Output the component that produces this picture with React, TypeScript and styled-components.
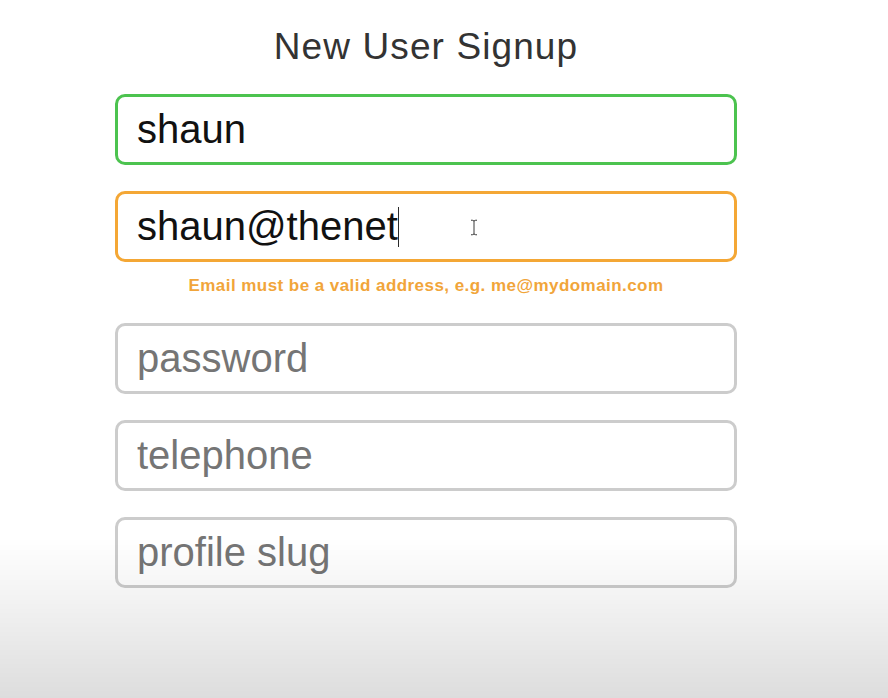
import React from "react";
import styled, { createGlobalStyle } from "styled-components";

const GlobalStyle = createGlobalStyle`
  html, body {
    margin: 0;
    padding: 0;
    background: #ffffff;
  }
  body {
    font-family: "Liberation Sans", Arial, Helvetica, sans-serif;
  }
  #root {
    min-height: 698px;
  }
`;

const Page = styled.main`
  display: flex;
  flex-direction: column;
  width: 622px;
  padding: 27px 0 0 115px;
`;

const Title = styled.h1`
  margin: 0 0 27px;
  font-size: 37px;
  line-height: 40px;
  font-weight: 400;
  letter-spacing: 1.1px;
  color: #333333;
  text-align: center;
`;

const Form = styled.form`
  display: flex;
  flex-direction: column;
  gap: 26px;
`;

const FieldGroup = styled.div`
  display: flex;
  flex-direction: column;
`;

type Status = "valid" | "invalid" | "idle";

const borderColors: Record<Status, string> = {
  valid: "#4cc34f",
  invalid: "#f4a735",
  idle: "#cccccc",
};

const InputWrap = styled.div`
  position: relative;
`;

const TextInput = styled.input<{ $status: Status }>`
  box-sizing: border-box;
  width: 100%;
  height: 71px;
  padding: 0 19px;
  border: 3px solid ${(p) => borderColors[p.$status]};
  border-radius: 10px;
  background: #ffffff;
  font-family: "Liberation Sans", Arial, Helvetica, sans-serif;
  font-size: 40px;
  color: #111111;
  outline: none;

  &::placeholder {
    color: #757575;
    opacity: 1;
  }
`;

const CaretLayer = styled.div`
  position: absolute;
  inset: 0;
  display: flex;
  align-items: center;
  padding-left: 22px;
  pointer-events: none;
  font-family: "Liberation Sans", Arial, Helvetica, sans-serif;
  font-size: 40px;
`;

const Ghost = styled.span`
  color: transparent;
  white-space: pre;
`;

const Caret = styled.span`
  display: inline-block;
  width: 1.5px;
  height: 40px;
  background: #2a2a2a;
`;

const MousePointer = styled.svg`
  position: absolute;
  left: 355px;
  top: 28px;
  pointer-events: none;
`;

const ErrorText = styled.p`
  margin: 13px 0 0;
  font-size: 17px;
  line-height: 22px;
  font-weight: 700;
  letter-spacing: 0.45px;
  color: #f1a53a;
  text-align: center;
`;

const Vignette = styled.div`
  position: fixed;
  left: 0;
  right: 0;
  bottom: 0;
  height: 160px;
  pointer-events: none;
  background: linear-gradient(
    to bottom,
    rgba(0, 0, 0, 0) 0%,
    rgba(0, 0, 0, 0.05) 40%,
    rgba(0, 0, 0, 0.135) 100%
  );
`;

export default function App() {
  const email = "shaun@thenet";
  return (
    <>
      <GlobalStyle />
      <Page>
        <Title>New User Signup</Title>
        <Form onSubmit={(e) => e.preventDefault()}>
          <FieldGroup>
            <TextInput $status="valid" type="text" placeholder="username" defaultValue="shaun" />
          </FieldGroup>
          <FieldGroup>
            <InputWrap>
              <TextInput $status="invalid" type="text" placeholder="email" defaultValue={email} />
              <CaretLayer>
                <Ghost>{email}</Ghost>
                <Caret />
              </CaretLayer>
              <MousePointer width="8" height="17" viewBox="0 0 8 17" fill="none">
                <path
                  d="M1 1.2c1.2 0 2.4.1 3 .8.6-.7 1.8-.8 3-.8M4 2v13M1 15.8c1.2 0 2.4-.1 3-.8.6.7 1.8.8 3 .8"
                  stroke="#3a3a3a"
                  strokeWidth="1"
                />
              </MousePointer>
            </InputWrap>
            <ErrorText>Email must be a valid address, e.g. me@mydomain.com</ErrorText>
          </FieldGroup>
          <FieldGroup>
            <TextInput $status="idle" type="password" placeholder="password" />
          </FieldGroup>
          <FieldGroup>
            <TextInput $status="idle" type="tel" placeholder="telephone" />
          </FieldGroup>
          <FieldGroup>
            <TextInput $status="idle" type="text" placeholder="profile slug" />
          </FieldGroup>
        </Form>
      </Page>
      <Vignette />
    </>
  );
}
